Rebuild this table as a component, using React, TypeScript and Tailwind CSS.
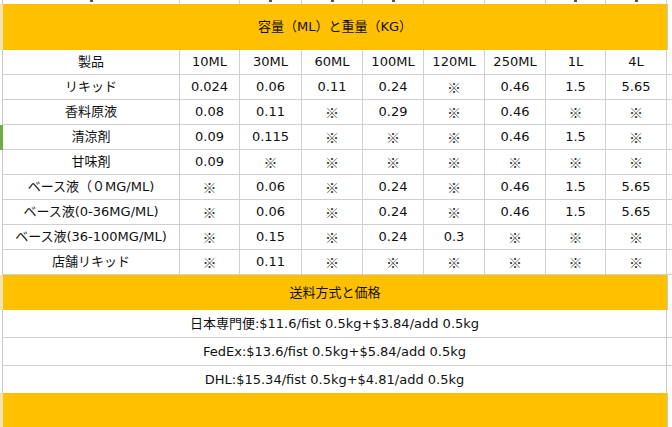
const sizes = ["10ML", "30ML", "60ML", "100ML", "120ML", "250ML", "1L", "4L"];

const rows: { name: string; values: string[]; active?: boolean }[] = [
  { name: "リキッド", values: ["0.024", "0.06", "0.11", "0.24", "※", "0.46", "1.5", "5.65"] },
  { name: "香料原液", values: ["0.08", "0.11", "※", "0.29", "※", "0.46", "※", "※"] },
  { name: "清涼剤", values: ["0.09", "0.115", "※", "※", "※", "0.46", "1.5", "※"], active: true },
  { name: "甘味剤", values: ["0.09", "※", "※", "※", "※", "※", "※", "※"] },
  { name: "ベース液（０MG/ML)", values: ["※", "0.06", "※", "0.24", "※", "0.46", "1.5", "5.65"] },
  { name: "ベース液(0-36MG/ML)", values: ["※", "0.06", "※", "0.24", "※", "0.46", "1.5", "5.65"] },
  { name: "ベース液(36-100MG/ML)", values: ["※", "0.15", "※", "0.24", "0.3", "※", "※", "※"] },
  { name: "店舗リキッド", values: ["※", "0.11", "※", "※", "※", "※", "※", "※"] },
];

const shipping = [
  "日本専門便:$11.6/fist 0.5kg+$3.84/add 0.5kg",
  "FedEx:$13.6/fist 0.5kg+$5.84/add 0.5kg",
  "DHL:$15.34/fist 0.5kg+$4.81/add 0.5kg",
];

const cols = "grid grid-cols-[177px_60px_62px_61px_61px_61px_61px_60px_61px_1fr]";
const cell = "flex items-center justify-center border-r border-b border-[#d0d0d0]";

function Value({ v }: { v: string }) {
  if (v === "※") {
    return (
      <span className="text-[14px] font-light text-[#333]" style={{ fontFamily: '"Noto Sans CJK JP", sans-serif' }}>
        ※
      </span>
    );
  }
  return <span>{v}</span>;
}

function Row({ name, values, active }: { name: string; values: string[]; active?: boolean }) {
  return (
    <div className="flex">
      <div className={`w-[3px] shrink-0 ${active ? "bg-[#70ad47]" : "border-r border-[#c8c8c8]"}`} />
      <div className={`${cols} h-[25px] flex-1`}>
        <div className={cell}>{name}</div>
        {values.map((v, i) => (
          <div key={i} className={cell}>
            <Value v={v} />
          </div>
        ))}
        <div className="border-b border-[#d0d0d0]" />
      </div>
    </div>
  );
}

function YellowBar({ height, children }: { height: string; children?: React.ReactNode }) {
  return (
    <div className={`flex ${height}`}>
      <div className="w-[3px] shrink-0 bg-[#f3e3b0]" />
      <div className="w-[664px] bg-[#ffc000] flex items-center justify-center">{children}</div>
      <div className="w-[1px] bg-[#c8c8c8]" />
      <div className="flex-1" />
    </div>
  );
}

export default function App() {
  return (
    <div
      className="w-[672px] h-[427px] overflow-hidden bg-white text-[13px] text-[#111]"
      style={{ fontFamily: '"DejaVu Sans", "Noto Sans CJK JP", sans-serif' }}
    >
      {/* cut-off row above */}
      <div className="flex h-[4px]">
        <div className="w-[3px] shrink-0 border-r border-[#c8c8c8]" />
        <div className={`${cols} flex-1`}>
          {Array.from({ length: 9 }).map((_, i) => (
            <div key={i} className="border-r border-[#d0d0d0] flex justify-center">
              {i === 0 || (i > 1 && i < 5) || i === 7 || i === 8 ? (
                <div className="w-[3px] h-[2px] bg-[#555]" />
              ) : null}
            </div>
          ))}
          <div />
        </div>
      </div>

      <YellowBar height="h-[46px]">容量（ML）と重量（KG）</YellowBar>

      <Row name="製品" values={sizes} />
      {rows.map((r) => (
        <Row key={r.name} {...r} />
      ))}

      <YellowBar height="h-[35px]">送料方式と価格</YellowBar>

      {shipping.map((s, i) => (
        <div key={s} className={`flex ${i === 2 ? "h-[27px]" : "h-[28px]"}`}>
          <div className="w-[3px] shrink-0 border-r border-[#c8c8c8]" />
          <div
            className={`w-[664px] flex items-center justify-center border-r border-[#c8c8c8] ${
              i === 2 ? "" : "border-b border-b-[#d0d0d0]"
            }`}
          >
            {s}
          </div>
          <div className={`flex-1 ${i === 2 ? "" : "border-b border-[#d0d0d0]"}`} />
        </div>
      ))}

      <YellowBar height="h-[40px]" />
    </div>
  );
}
